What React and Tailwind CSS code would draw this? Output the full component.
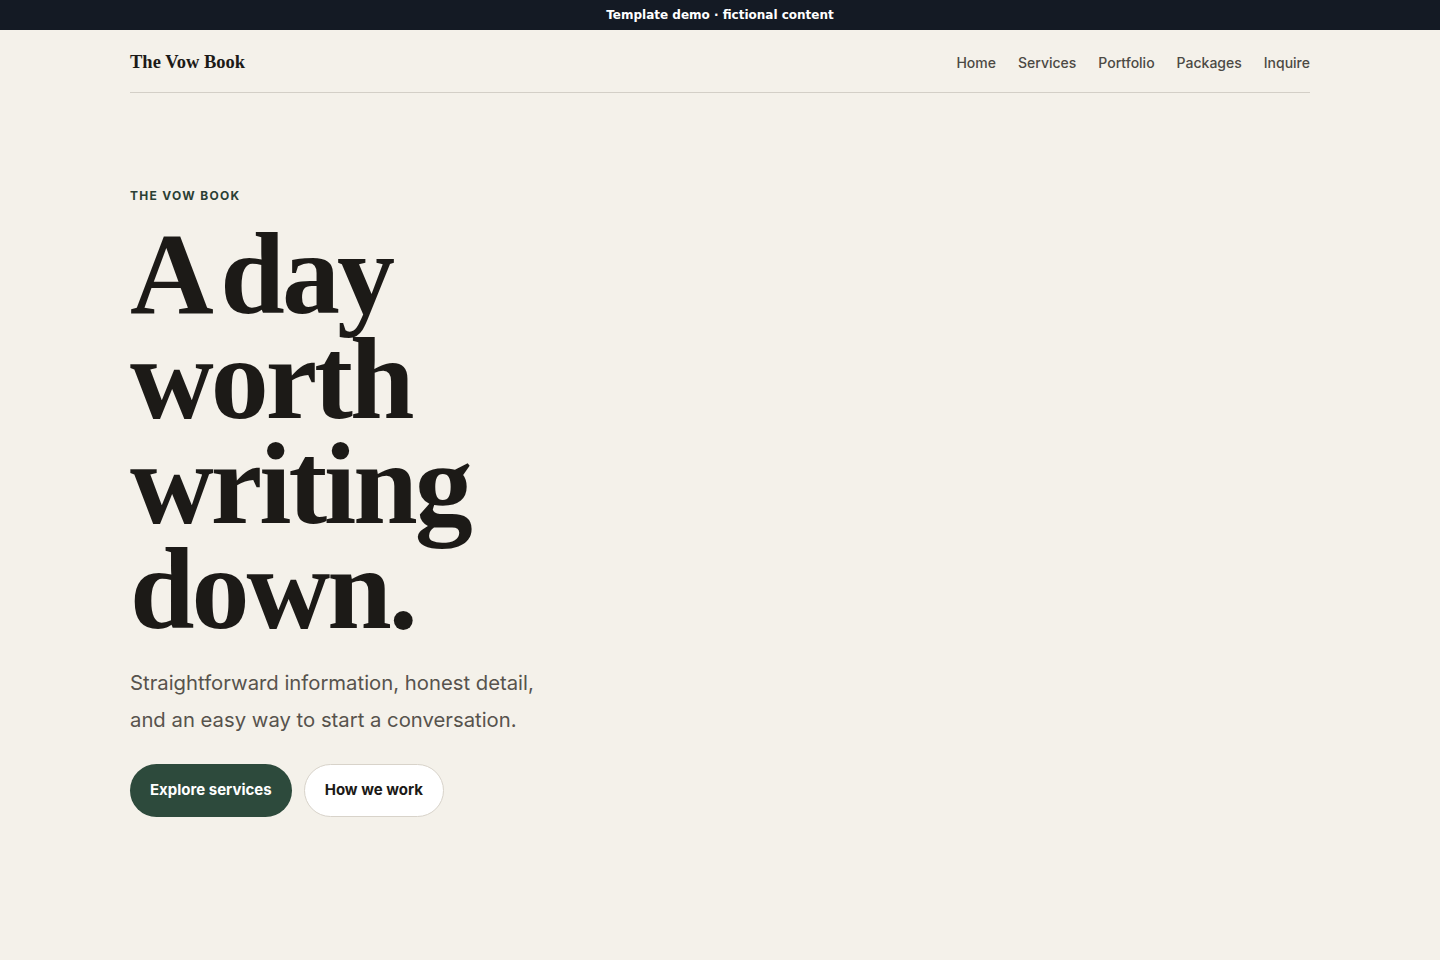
export default function App() {
    const nav = ["Home", "Services", "Portfolio", "Packages", "Inquire"];

    return (
        <div className="min-h-[960px] bg-[#f4f1ea] font-['Inter',sans-serif]">
            {/* demo banner */}
            <div className="flex h-[30px] items-center justify-center bg-[#141a24] text-[12px] font-bold text-white font-['DejaVu_Sans',sans-serif]">
                Template demo · fictional content
            </div>

            <div className="mx-auto w-[1180px]">
                <header className="flex h-[63px] items-center justify-between border-b border-[#d3cfc7]">
                    <span className="pt-[3px] text-[18.5px] font-bold text-[#1c1a17] font-['Liberation_Serif',serif]">
                        The Vow Book
                    </span>
                    <nav className="flex gap-[22px] pt-[2px] text-[14px] font-medium text-[#4c4944]">
                        {nav.map((item) => (
                            <a key={item} href="#" className="hover:text-[#1c1a17]">
                                {item}
                            </a>
                        ))}
                    </nav>
                </header>

                <section className="pt-[94px]">
                    <p className="text-[12px] font-bold tracking-[1.3px] text-[#2b3f34]">
                        THE VOW BOOK
                    </p>
                    <h1 className="mt-[17px] text-[116px] leading-[105px] font-bold tracking-[-3px] [word-spacing:-10px] text-[#1c1a17] font-['Liberation_Serif',serif]">
                        A day
                        <br />
                        worth
                        <br />
                        writing
                        <br />
                        down.
                    </h1>
                    <p className="mt-[22px] text-[20.3px] leading-[37px] text-[#57534d]">
                        Straightforward information, honest detail,
                        <br />
                        and an easy way to start a conversation.
                    </p>
                    <div className="mt-[26px] flex gap-[12px]">
                        <a
                            href="#"
                            className="flex h-[53px] items-center rounded-full bg-[#2d4a3c] px-[20px] text-[15px] font-bold text-white"
                        >
                            Explore services
                        </a>
                        <a
                            href="#"
                            className="flex h-[53px] items-center rounded-full border border-[#d8d3ca] bg-white px-[20px] text-[15px] font-bold text-[#1c1a17]"
                        >
                            How we work
                        </a>
                    </div>
                </section>
            </div>
        </div>
    );
}
